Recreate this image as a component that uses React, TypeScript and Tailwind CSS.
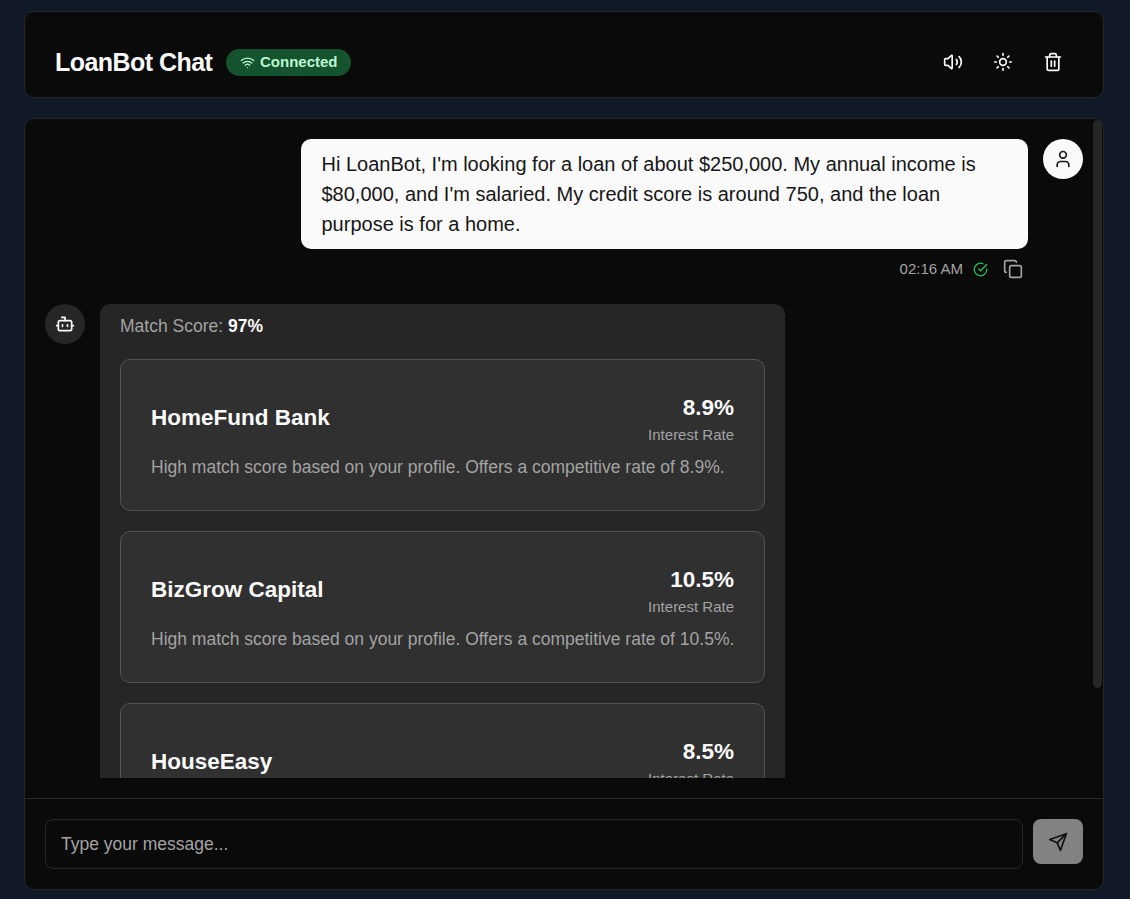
import React from "react";
import { Bot, Copy, Sun, Trash2, User, Volume2, Wifi } from "lucide-react";

const lenders = [
  { name: "HomeFund Bank", rate: "8.9%" },
  { name: "BizGrow Capital", rate: "10.5%" },
  { name: "HouseEasy", rate: "8.5%" },
];

function LenderCard({ name, rate }: { name: string; rate: string }) {
  return (
    <div className="h-[152px] shrink-0 rounded-[10px] border border-[#535353] bg-[#303030] px-[30px] pt-[30px]">
      <div className="flex items-center justify-between">
        <h3 className="text-[22.5px] leading-[35px] font-bold text-[#fafafa]">{name}</h3>
        <div className="text-right">
          <div className="text-[22.5px] leading-[35px] font-bold text-[#fafafa]">{rate}</div>
          <div className="text-[15px] leading-5 text-[#a3a3a3]">Interest Rate</div>
        </div>
      </div>
      <p className="mt-[10px] whitespace-nowrap text-[17.5px] leading-[25px] text-[#a3a3a3]">
        High match score based on your profile. Offers a competitive rate of {rate}.
      </p>
    </div>
  );
}

export default function App() {
  return (
    <div className="flex h-[899px] w-[1130px] flex-col gap-5 overflow-hidden bg-[#111827] pt-[11px] pr-[26px] pb-[9px] pl-6 font-['Liberation_Sans',Arial,sans-serif] text-[#fafafa]">
      <header className="flex h-[87px] shrink-0 items-center justify-between rounded-[10px] border border-[#262626] bg-[#0a0a0a] pt-[15px] pr-[30px] pl-[30px]">
        <div className="flex items-center gap-[14px]">
          <h1 className="w-[157px] whitespace-nowrap text-[25px] leading-[35px] font-bold tracking-[-0.55px]">LoanBot Chat</h1>
          <span className="flex h-[27px] w-[125px] items-center rounded-full bg-[#14532d] pl-[14px] text-[15px] font-bold text-[#bbf7d0]">
            <Wifi className="mr-[5px] size-[15px]" />
            Connected
          </span>
        </div>
        <div className="flex">
          <button className="flex h-[45px] w-[50px] items-center justify-center"><Volume2 size={20} /></button>
          <button className="flex h-[45px] w-[50px] items-center justify-center"><Sun size={20} /></button>
          <button className="-mr-[5px] flex h-[45px] w-[50px] items-center justify-center"><Trash2 size={20} /></button>
        </div>
      </header>
      <main className="relative flex min-h-0 flex-1 flex-col rounded-[10px] border border-[#262626] bg-[#0a0a0a]">
        <div className="mx-5 mt-5 flex min-h-0 flex-1 flex-col overflow-hidden">
          <div className="flex shrink-0 justify-end gap-[15px]">
            <div className="flex flex-col items-end">
              <div className="h-[110px] w-[727px] rounded-[10px] bg-[#fafafa] py-[10px] pr-5 pl-[20.5px] text-[20px] leading-[30px] text-[#171717]">
                Hi LoanBot, I'm looking for a loan of about $250,000. My annual income is $80,000, and I'm salaried. My credit score is around 750, and the loan purpose is for a home.
              </div>
              <div className="mt-[10px] flex h-5 items-center pr-[5px] text-[15px] text-[#a3a3a3]">
                <span>02:16 AM</span>
                <svg className="mt-px ml-[10px] size-[15px]" viewBox="0 0 24 24" fill="none" stroke="#22c55e" strokeWidth="2" strokeLinecap="round" strokeLinejoin="round">
                  <path d="M22 11.08V12a10 10 0 1 1-5.93-9.14" />
                  <path d="m9 11 3 3L22 4" />
                </svg>
                <Copy className="ml-[15px]" size={20} />
              </div>
            </div>
            <div className="flex size-10 items-center justify-center rounded-full bg-[#fafafa] text-[#171717]"><User size={20} /></div>
          </div>
          <div className="mt-[25px] flex shrink-0 gap-[15px]">
            <div className="flex size-10 items-center justify-center rounded-full bg-[#262626]"><Bot size={20} /></div>
            <div className="flex w-[685px] flex-col gap-5 rounded-[10px] bg-[#262626] px-5 pt-[10px] pb-5">
              <p className="text-[17.5px] leading-[25px] text-[#a3a3a3]">
                Match Score: <b className="text-[#fafafa]">97%</b>
              </p>
              {lenders.map((l) => <LenderCard key={l.name} {...l} />)}
            </div>
          </div>
        </div>
        <div className="absolute top-px right-px h-[568px] w-[9px] rounded-full bg-[#262626]" />
        <form className="mt-5 flex h-[91px] shrink-0 gap-[10px] border-t border-[#262626] px-5 pt-5">
          <input className="h-[50px] min-w-0 flex-1 rounded-[8px] border border-[#262626] bg-transparent px-[15px] text-[17.5px] placeholder:text-[#a3a3a3]" placeholder="Type your message..." />
          <button type="button" className="flex h-[45px] w-[50px] items-center justify-center rounded-[8px] bg-[#828282] text-[#111111]">
            <svg className="size-5" viewBox="0 0 24 24" fill="none" stroke="currentColor" strokeWidth="2" strokeLinecap="round" strokeLinejoin="round">
              <path d="m22 2-7 20-4-9-9-4Z" />
              <path d="M22 2 11 13" />
            </svg>
          </button>
        </form>
      </main>
    </div>
  );
}
